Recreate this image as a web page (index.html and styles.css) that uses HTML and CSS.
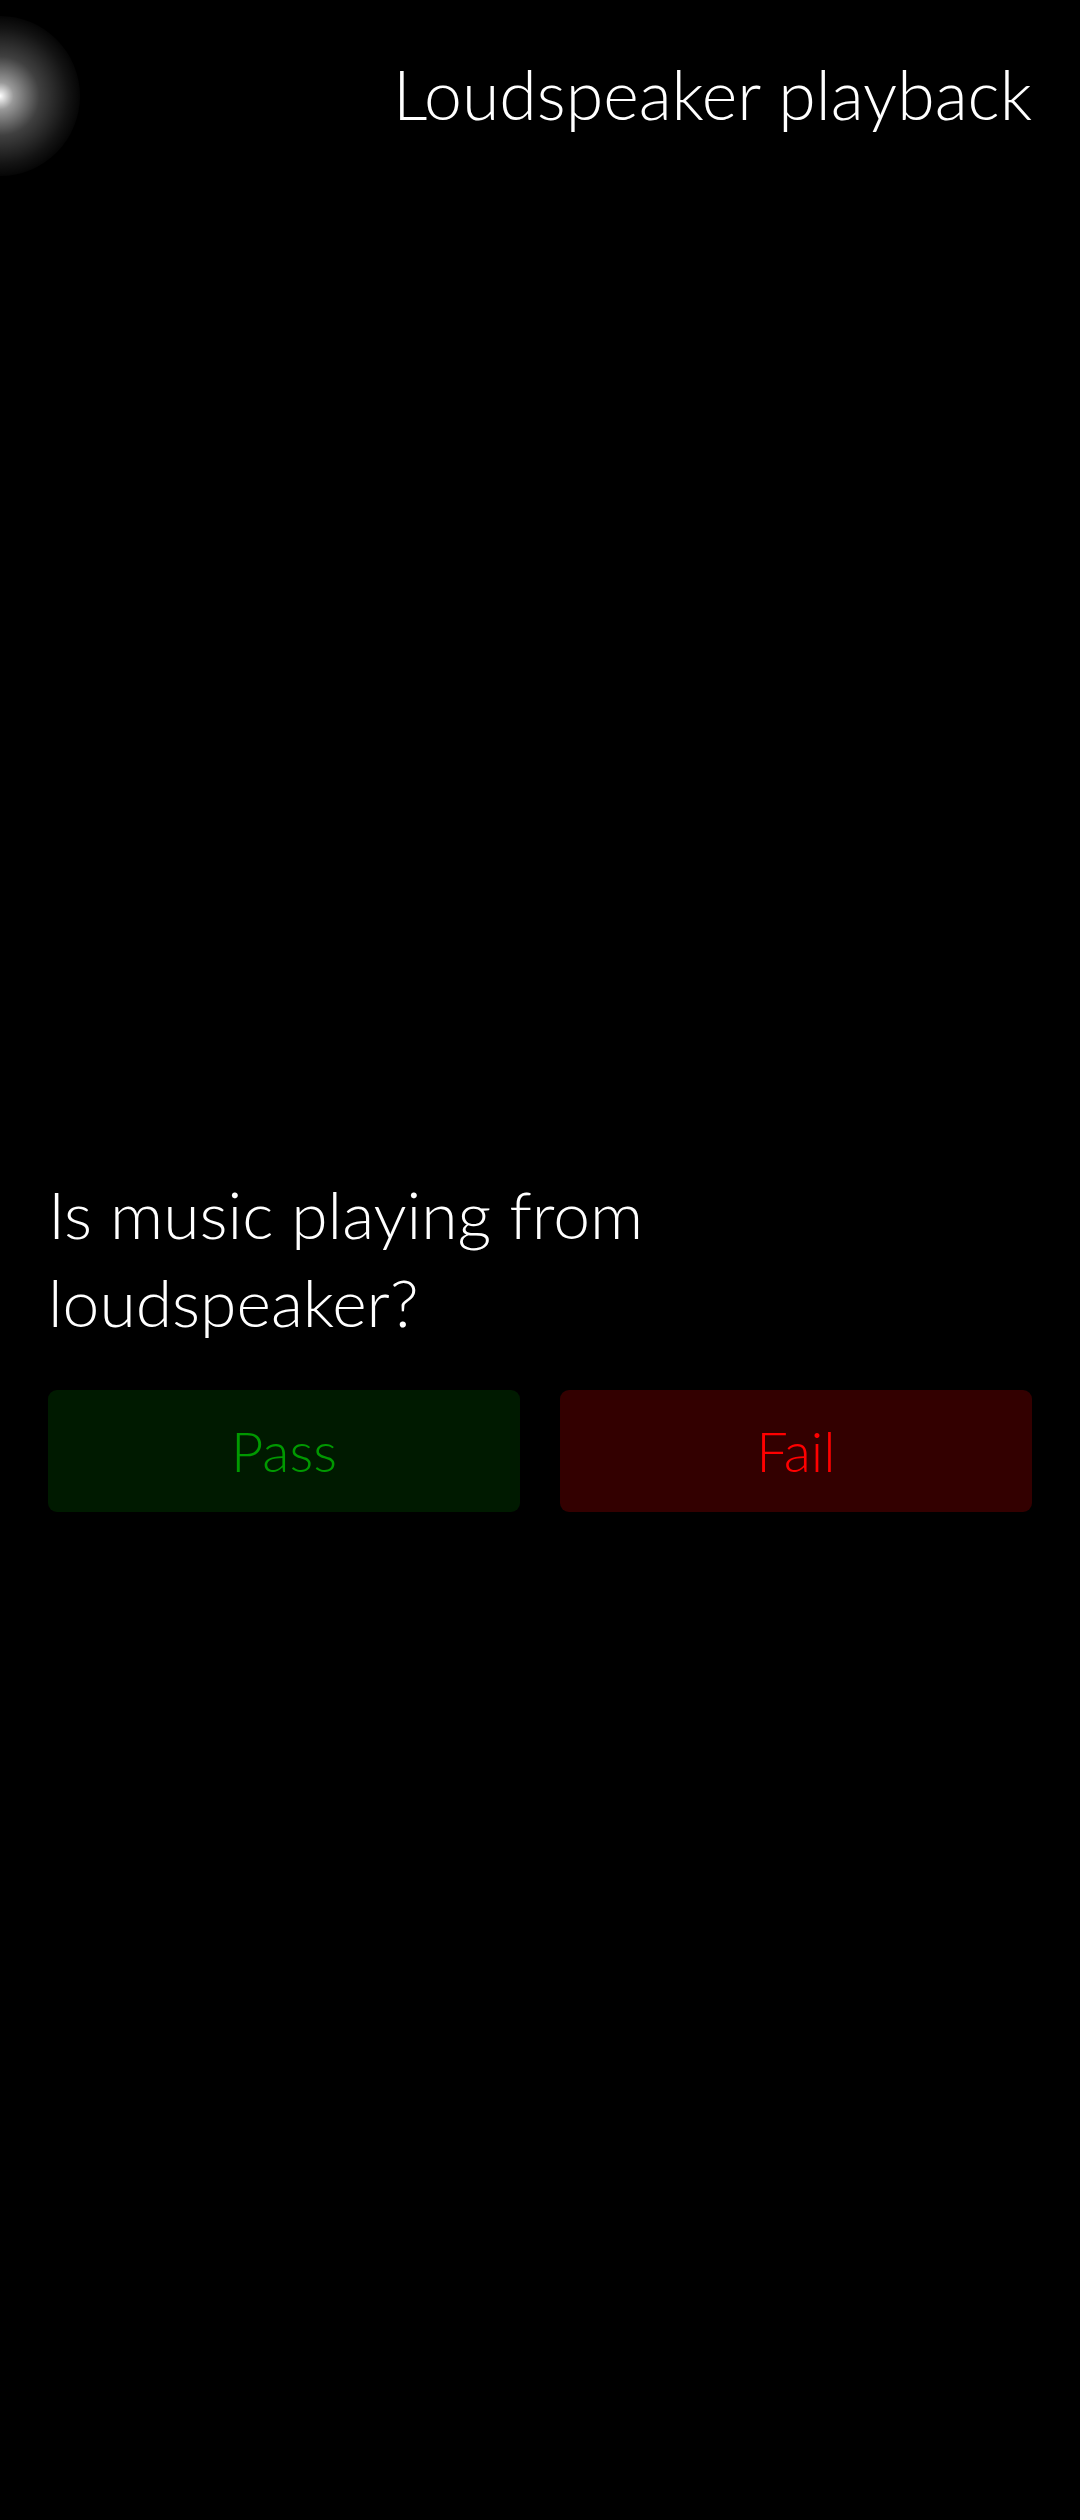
FILE: index.html
```html
<!DOCTYPE html>
<html>
<head>
<meta charset="utf-8">
<link rel="stylesheet" href="styles.css">
</head>
<body>
<div class="page">
  <div class="glow"></div>
  <header class="header">
    <h1 class="title">Loudspeaker playback</h1>
  </header>
  <main class="content">
    <p class="question">Is music playing from loudspeaker?</p>
    <div class="buttons">
      <button class="btn btn-pass">Pass</button>
      <button class="btn btn-fail">Fail</button>
    </div>
  </main>
</div>
</body>
</html>
```

FILE: styles.css
```css
html, body {
  margin: 0;
  padding: 0;
  background: #000;
}
.page {
  position: relative;
  width: 1080px;
  height: 2520px;
  background: #000;
  font-family: "Lato", "Liberation Sans", sans-serif;
  font-weight: 300;
  color: #fff;
  overflow: hidden;
}
.glow {
  position: absolute;
  left: -80px;
  top: 16px;
  width: 160px;
  height: 160px;
  border-radius: 50%;
  background: radial-gradient(circle at center, rgba(255,255,255,1) 0, rgba(255,255,255,0.6) 12%, rgba(255,255,255,0.25) 35%, rgba(255,255,255,0.08) 60%, rgba(255,255,255,0) 75%);
}
.header {
  display: flex;
  justify-content: flex-end;
  padding: 0 48px 0 48px;
  height: 190px;
}
.title {
  margin: 0;
  padding-top: 50px;
  font-size: 68px;
  font-weight: 300;
  line-height: 88px;
  letter-spacing: 0;
}
.content {
  padding: 980px 48px 0 48px;
}
.question {
  margin: 0;
  font-size: 66px;
  line-height: 88px;
  width: 760px;
}
.buttons {
  display: flex;
  gap: 40px;
  margin-top: 44px;
}
.btn {
  flex: 1;
  height: 122px;
  border: none;
  border-radius: 9px;
  font-family: inherit;
  font-weight: 300;
  font-size: 56px;
  padding: 0 0 2px 0;
}
.btn-pass {
  background: #001a00;
  color: #009900;
}
.btn-fail {
  background: #330000;
  color: #ff0000;
}
```
